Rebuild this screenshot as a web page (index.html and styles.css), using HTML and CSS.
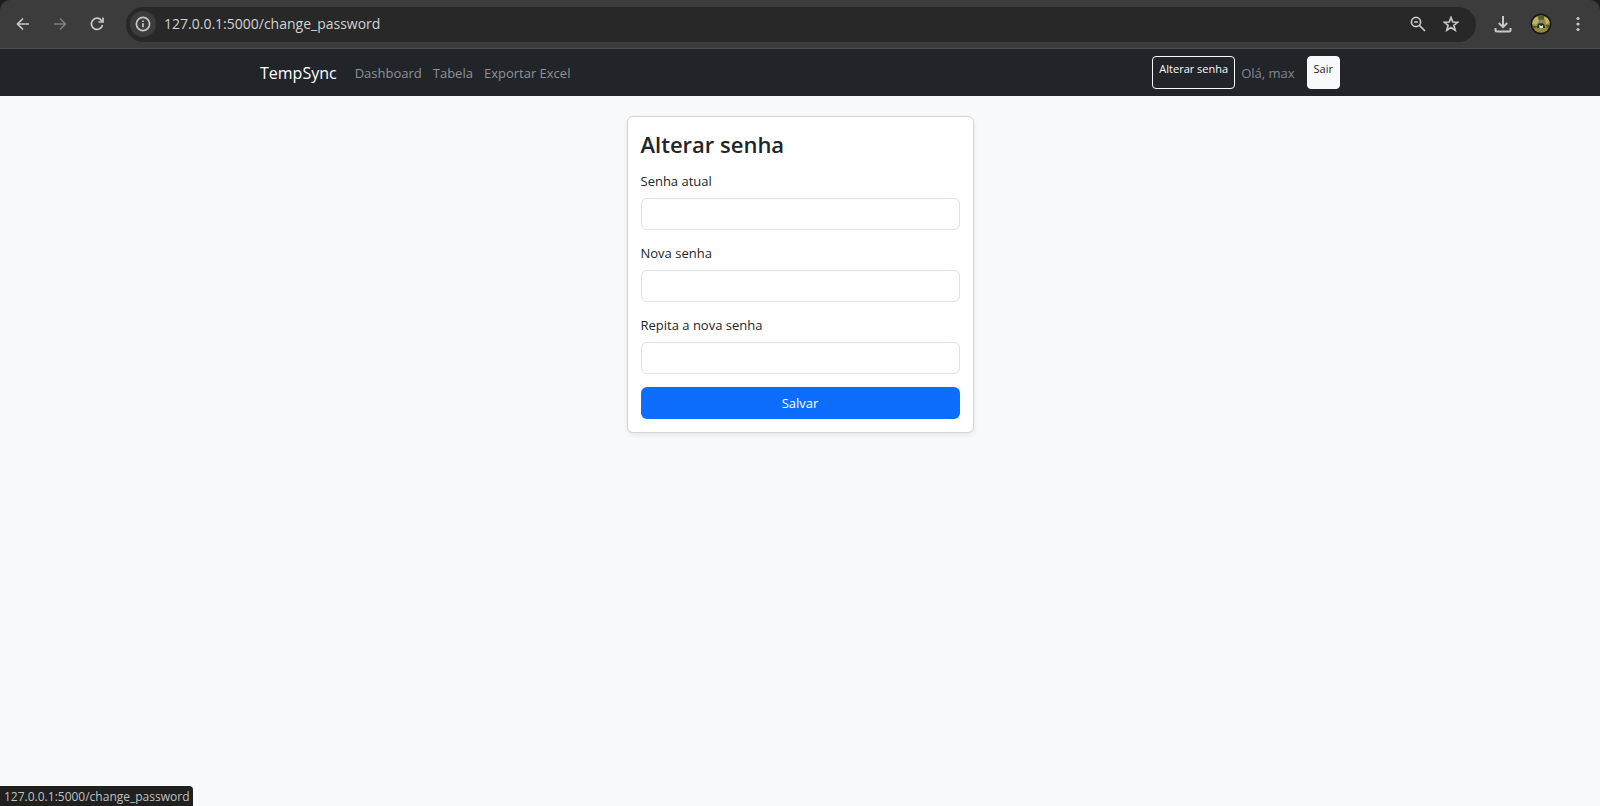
FILE: index.html
```html
<!DOCTYPE html>
<html lang="pt-BR">
<head>
<meta charset="utf-8">
<meta name="viewport" content="width=device-width, initial-scale=1">
<title>TempSync</title>
<link rel="stylesheet" href="styles.css">
</head>
<body>
<header class="toolbar">
  <button class="tool" type="button" aria-label="Voltar"><svg viewBox="0 0 16 16"><path d="M14 8H3M8 2.5 2.5 8 8 13.5"/></svg></button>
  <button class="tool tool-off" type="button" aria-label="Avançar" disabled><svg viewBox="0 0 16 16"><path d="M2 8h11M8 2.5 13.500 8 8 13.500"/></svg></button>
  <button class="tool" type="button" aria-label="Recarregar"><svg viewBox="0 0 16 16"><path d="M13.500 9A5.600 5.600 0 1 1 12.300 4.200L14 6M14 1.500V6H9.500"/></svg></button>
  <div class="address">
    <button class="site-info" type="button" aria-label="Informações do site"><svg viewBox="0 0 16 16"><circle cx="8" cy="8" r="6.600"/><path d="M8 7.200v4M8 4.400v1.600"/></svg></button>
    <input class="url" type="text" aria-label="Endereço" value="127.0.0.1:5000/change_password">
    <button class="tool" type="button" aria-label="Zoom"><svg viewBox="0 0 16 16"><circle cx="6" cy="6" r="4.600"/><path d="M9.400 9.400 15 15M4 6h4"/></svg></button>
    <button class="tool" type="button" aria-label="Favoritar"><svg viewBox="0 0 16 16"><path d="m8 1.500 1.800 4.500 4.900.3-3.800 3.100 1.300 4.800L8 11.500l-4.200 2.700 1.300-4.800L1.300 6.300 6.200 6z"/></svg></button>
  </div>
  <div class="actions">
    <button class="tool tool-download" type="button" aria-label="Downloads"><svg viewBox="0 0 18 18"><path d="M9 1v11M4.800 8 9 12.200 13.200 8M1.500 13v2q0 1.500 1.500 1.500h12q1.500 0 1.500-1.500v-2"/></svg></button>
    <button class="tool tool-profile" type="button" aria-label="Perfil"><svg viewBox="0 0 22 22">
      <defs><clipPath id="face"><circle cx="11" cy="11" r="8.800"/></clipPath></defs>
      <circle class="a-ring" cx="11" cy="11" r="10.500"/>
      <g clip-path="url(#face)"><path class="a-field" d="M0 0h22v22H0z"/><path class="a-light" d="M3 6l4-3 2 5-3 4-4-1zM14 4l4 1 2 5-4 1z"/><path class="a-leaf" d="M8 2h6v4l-2 2H9zM2 13h5l-1 2H2zM16 12h4v3h-3z"/><path class="a-coat" d="M7 15q0-4 3-5h2q3 1 3 5z"/><circle class="a-skin" cx="11" cy="8.500" r="2"/><path class="a-shirt" d="m9 12 .5 3h3.500v-3l-1.500 1z"/></g>
    </svg></button>
    <button class="tool tool-menu" type="button" aria-label="Menu"><svg viewBox="0 0 16 16"><circle class="dot" cx="8" cy="2.500" r="1.600"/><circle class="dot" cx="8" cy="8" r="1.600"/><circle class="dot" cx="8" cy="13.500" r="1.600"/></svg></button>
  </div>
</header>
<nav class="navbar">
  <div class="container">
    <a class="brand" href="#">TempSync</a>
    <div class="links">
      <a href="#">Dashboard</a>
      <a href="#">Tabela</a>
      <a href="#">Exportar Excel</a>
    </div>
    <div class="account">
      <a class="btn btn-outline" href="#">Alterar senha</a>
      <span class="hello">Olá, max</span>
      <a class="btn btn-light" href="#">Sair</a>
    </div>
  </div>
</nav>
<main class="page">
  <form class="card">
    <h1>Alterar senha</h1>
    <div class="field"><label for="current">Senha atual</label><input id="current" type="password"></div>
    <div class="field"><label for="new">Nova senha</label><input id="new" type="password"></div>
    <div class="field"><label for="repeat">Repita a nova senha</label><input id="repeat" type="password"></div>
    <button class="save" type="button">Salvar</button>
  </form>
</main>
<div class="status">127.0.0.1:5000/change_password</div>
</body>
</html>
```
FILE: styles.css
```css
* { box-sizing: border-box; }

html { background: #1d1d1d; }

body {
  margin: 0;
  min-height: 100vh;
  display: flex;
  flex-direction: column;
  color: #212529;
  font: 13px/22px "Open Sans", "Noto Sans", sans-serif;
}

button, input { font: inherit; color: inherit; }
button { padding: 0; border: 0; background: none; }
a { color: inherit; text-decoration: none; }
svg { display: block; fill: none; stroke: currentColor; stroke-width: 1.7; }

.toolbar {
  display: flex;
  align-items: center;
  gap: 21px;
  height: 49px;
  padding: 0 14px 0 15px;
  background: #3c3c3c;
  border-bottom: 1px solid #4a4b4a;
  border-radius: 10px 10px 0 0;
  color: #c7c7c7;
}
.tool svg { width: 16px; height: 16px; }
.tool-off { color: #7c7c7c; }
.address {
  flex: 1;
  display: flex;
  align-items: center;
  gap: 17px;
  height: 35px;
  padding: 0 17px 0 4px;
  background: #282828;
  border-radius: 18px;
}
.site-info {
  display: grid;
  place-items: center;
  width: 26px;
  height: 26px;
  border-radius: 50%;
  background: #3c3c3c;
}
.site-info svg { width: 16px; height: 16px; }
.url {
  flex: 1;
  min-width: 0;
  margin-left: -9px;
  padding: 0;
  border: 0;
  background: none;
  color: #d2d2d2;
  font-size: 14px;
}
.actions { display: flex; align-items: center; gap: 18px; margin-left: -3px; }
.tool-download svg { width: 18px; height: 18px; stroke-width: 2; }
.tool-profile svg { width: 22px; height: 22px; stroke: none; }
.dot { fill: currentColor; stroke: none; }
.a-ring { fill: #1c1712; }
.a-field { fill: #8d8a3c; }
.a-leaf { fill: #5d5a22; }
.a-light { fill: #b9b46c; }
.a-coat { fill: #23262b; }
.a-skin { fill: #8f8272; }
.a-shirt { fill: #dfe3ea; }

.navbar { padding: 7px 0; background: #212529; }
.container {
  display: flex;
  align-items: center;
  max-width: 1080px;
  margin: 0 auto;
}
.brand { margin-right: 18px; color: #fff; font-size: 16px; }
.links { display: flex; gap: 11px; color: #909294; }
.account { display: flex; align-items: center; margin-left: auto; }
.btn {
  height: 33px;
  padding: 1px 6px;
  border: 1px solid #f8f9fa;
  border-radius: 4px;
  font-size: 11px;
}
.btn-outline { color: #f8f9fa; }
.btn-light { background: #f8f9fa; }
.hello { margin: 0 12px 0 6px; color: #85888b; }

.page { flex: 1; padding: 20px; background: #f8f9fa; }
.card {
  max-width: 347px;
  margin: 0 auto;
  padding: 13px;
  background: #fff;
  border: 1px solid #d3d5d7;
  border-radius: 6px;
  box-shadow: 0 2px 4px rgba(0, 0, 0, 0.08);
}
h1 { margin: 0 0 11px; font-size: 22px; line-height: 29px; font-weight: 600; }
.field { display: flex; flex-direction: column; gap: 6px; margin-bottom: 12px; }
.field input {
  width: 100%;
  height: 32px;
  padding: 4px 10px;
  border: 1px solid #dee2e6;
  border-radius: 6px;
  background: #fff;
}
.save {
  width: 100%;
  height: 32px;
  margin-top: 1px;
  border-radius: 6px;
  background: #0d6efd;
  color: #fff;
}

.status {
  position: fixed;
  left: 0;
  bottom: 0;
  padding: 2px 4px 0;
  background: #1f201f;
  border-radius: 0 4px 0 0;
  color: #c2c2c2;
  font-size: 12px;
  line-height: 18px;
}
```
